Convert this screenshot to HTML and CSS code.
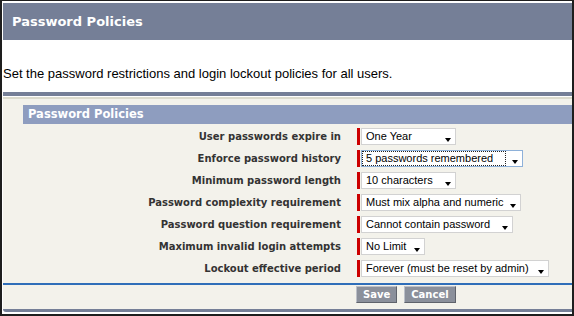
FILE: index.html
```html
<!DOCTYPE html>
<html lang="en">
<head>
    <title>Password Policies</title>
    <meta charset="UTF-8">
    <meta name="viewport" content="width=device-width, initial-scale=1.0">
    <link rel="stylesheet" href="styles.css">
</head>
<body>
    <div class="frame">
        <div class="page-header">
            <h1>Password Policies</h1>
        </div>

        <p class="intro">Set the password restrictions and login lockout policies for all users.</p>

        <div class="panel">
            <h2 class="section-title">Password Policies</h2>

            <div class="form-grid">
                <label class="form-label">User passwords expire in</label>
                <div class="field"><span class="select w-expire">One Year</span></div>

                <label class="form-label">Enforce password history</label>
                <div class="field"><span class="select select-focused w-history"><span class="focus-ring">5 passwords remembered</span></span></div>

                <label class="form-label">Minimum password length</label>
                <div class="field"><span class="select w-length">10 characters</span></div>

                <label class="form-label">Password complexity requirement</label>
                <div class="field"><span class="select w-complexity">Must mix alpha and numeric</span></div>

                <label class="form-label">Password question requirement</label>
                <div class="field"><span class="select w-question">Cannot contain password</span></div>

                <label class="form-label">Maximum invalid login attempts</label>
                <div class="field"><span class="select w-attempts">No Limit</span></div>

                <label class="form-label">Lockout effective period</label>
                <div class="field"><span class="select w-lockout">Forever (must be reset by admin)</span></div>
            </div>

            <div class="form-actions">
                <button class="btn" type="button">Save</button>
                <button class="btn" type="button">Cancel</button>
            </div>
        </div>
    </div>
</body>
</html>
```

FILE: styles.css
```css
* { box-sizing: border-box; }
body {
    margin: 0;
    font-family: 'Liberation Sans', Arial, sans-serif;
    background: #ffffff;
}
.frame {
    width: 574px;
    height: 316px;
    border: 2px solid #1e1e1e;
    border-top-width: 1px;
    padding: 2px 0 2px 1px;
    background: #ffffff;
}
.page-header {
    height: 37px;
    background: #757f97;
}
.page-header h1 {
    margin: 0;
    padding: 1px 0 0 9px;
    line-height: 36px;
    font-family: 'DejaVu Sans', Verdana, sans-serif;
    font-size: 13px;
    font-weight: bold;
    color: #ffffff;
}
.intro {
    margin: 0;
    padding: 26px 0 11px 0;
    font-size: 13px;
    line-height: 15px;
    color: #000000;
}
.panel {
    border-top: 4px solid #757f97;
    border-bottom: 3px solid #757f97;
    border-bottom-left-radius: 3px;
    padding-top: 9px;
    background: linear-gradient(#ffffff 0 1px, #dcdbcd 1px 3px, #f3f2eb 3px);
}
.section-title {
    margin: 0 0 1px 20px;
    padding-left: 5px;
    height: 19px;
    line-height: 19px;
    font-family: 'DejaVu Sans', Verdana, sans-serif;
    font-size: 11.5px;
    font-weight: bold;
    color: #ffffff;
    background: #8e9dbf;
}
.form-grid {
    display: grid;
    grid-template-columns: 338px 1fr;
    grid-auto-rows: 22px;
    column-gap: 16px;
}
.form-label {
    display: flex;
    align-items: center;
    justify-content: flex-end;
    font-family: 'DejaVu Sans', Verdana, sans-serif;
    font-size: 10px;
    font-weight: bold;
    color: #333333;
}
.field {
    display: flex;
    align-items: center;
}
.select {
    position: relative;
    display: block;
    height: 17px;
    margin-left: 4px;
    padding-left: 4px;
    border: 1px solid #d2d2d2;
    background: #ffffff;
    font-size: 11px;
    line-height: 15px;
    color: #000000;
    white-space: nowrap;
}
/* required marker */
.select::before {
    content: "";
    position: absolute;
    left: -5px;
    top: -1px;
    width: 3px;
    height: 17px;
    background: #cc0000;
}
.select::after {
    content: "";
    position: absolute;
    right: 4px;
    top: 9px;
    border-left: 3.5px solid transparent;
    border-right: 3.5px solid transparent;
    border-top: 4px solid #000000;
}
.select-focused {
    padding-left: 0;
    border-color: #8eb1d9;
}
.focus-ring {
    display: block;
    height: 15px;
    margin-right: 16px;
    padding-left: 3px;
    border: 1px dotted #222222;
    line-height: 13px;
}
.w-expire { width: 95px; }
.w-history { width: 162px; }
.w-length { width: 95px; }
.w-complexity { width: 160px; }
.w-question { width: 152px; }
.w-attempts { width: 64px; }
.w-lockout { width: 188px; }
.form-actions {
    display: flex;
    gap: 7px;
    margin-top: 4px;
    padding: 1px 0 6px 353px;
    border-top: 2px solid #2f6eb9;
}
.btn {
    height: 17px;
    margin: 0;
    padding: 0 6px;
    border: 1px solid;
    border-color: #bcc0c8 #5f636b #5f636b #bcc0c8;
    background: #8b909b;
    color: #ffffff;
    font-family: 'DejaVu Sans', Verdana, sans-serif;
    font-size: 10px;
    font-weight: bold;
    line-height: 15px;
}
```
